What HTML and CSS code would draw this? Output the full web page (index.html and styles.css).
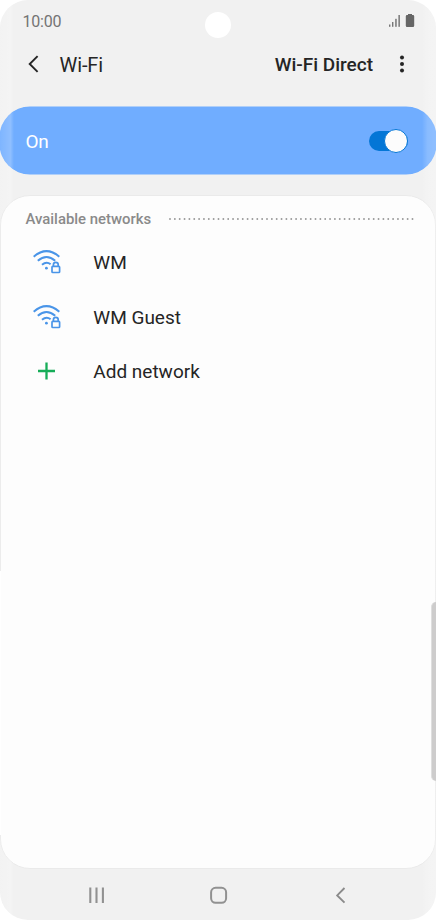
FILE: index.html
```
<!DOCTYPE html>
<html lang="en">
<head>
<meta charset="utf-8">
<title>Wi-Fi</title>
<link rel="stylesheet" href="styles.css">
</head>
<body>
<div class="phone">
  <header class="status">
    <span class="time">10:00</span>
    <svg class="status-icons" width="28" height="16" viewBox="0 0 28 16">
      <g fill="#777"><rect x="1" y="10.5" width="1.4" height="2.3"/><rect x="4" y="8" width="1.4" height="4.8"/><rect x="7.2" y="4.8" width="1.5" height="8"/><rect x="10.4" y="1" width="1.5" height="11.8"/></g>
      <path d="M20 0h4v1h1q1.200 0 1.200 1.200v9.600q0 1.200-1.200 1.200h-6q-1.200 0-1.200-1.200V2.200Q17.800 1 19 1h1z" fill="#666"/>
    </svg>
  </header>
  <i class="camera"></i>
  <nav class="appbar">
    <svg class="back" width="12" height="18" viewBox="0 0 12 18"><path d="M10.600 1.100 2.700 9l7.900 7.900" fill="none" stroke="#252525" stroke-width="1.900"/></svg>
    <h1 class="title">Wi-Fi</h1>
    <span class="direct">Wi-Fi Direct</span>
    <svg class="more" width="6" height="18" viewBox="0 0 6 18" fill="#252525"><circle cx="3" cy="2.600" r="2"/><circle cx="3" cy="9" r="2"/><circle cx="3" cy="15.400" r="2"/></svg>
  </nav>
  <section class="power">
    <span class="power-label">On</span>
    <span class="switch"><i class="knob"></i></span>
  </section>
  <main class="card">
    <div class="heading"><h2 class="heading-text">Available networks</h2>
      <svg class="dots" width="248" height="4" viewBox="0 0 248 4"><path d="M2 2H247" stroke="#999" stroke-width="1.900" stroke-linecap="round" stroke-dasharray="0 4.850"/></svg>
    </div>
    <ul class="networks">
      <li class="network">
        <svg class="wifi" width="30" height="26" viewBox="0 0 30 26" fill="none" stroke="#4a95e8" stroke-width="2">
          <path d="M1.700 7.700Q14.500-3.500 27.300 7.700M5.800 11.800Q14.500 4.100 23.200 11.800M10 15.700Q14.500 12 18.600 15.200"/><circle cx="14.400" cy="19.200" r="1.400" fill="#4a95e8" stroke="none"/>
          <rect x="20" y="17.400" width="7.600" height="6.100" rx=".8" stroke-width="1.700"/><path d="M21.400 17.300v-1.500a2.400 2.400 0 0 1 4.800 0v1.500" stroke-width="1.700"/>
        </svg>
        <span class="name">WM</span>
      </li>
      <li class="network">
        <svg class="wifi" width="30" height="26" viewBox="0 0 30 26" fill="none" stroke="#4a95e8" stroke-width="2">
          <path d="M1.700 7.700Q14.500-3.500 27.300 7.700M5.800 11.800Q14.500 4.100 23.200 11.800M10 15.700Q14.500 12 18.600 15.200"/><circle cx="14.400" cy="19.200" r="1.400" fill="#4a95e8" stroke="none"/>
          <rect x="20" y="17.400" width="7.600" height="6.100" rx=".8" stroke-width="1.700"/><path d="M21.400 17.300v-1.500a2.400 2.400 0 0 1 4.800 0v1.500" stroke-width="1.700"/>
        </svg>
        <span class="name">WM Guest</span>
      </li>
      <li class="network">
        <svg class="wifi" width="30" height="26" viewBox="0 0 30 26"><path d="M6 13h17M14.500 4.500v17" stroke="#16ad58" stroke-width="2.300"/></svg>
        <span class="name">Add network</span>
      </li>
    </ul>
  </main>
  <footer class="navbar">
    <svg width="18" height="18" viewBox="0 0 18 18" stroke="#919191" stroke-width="2.100"><path d="M2.300 1.500v15.500M8.500 1.500v15.500M14.900 1.500v15.500"/></svg>
    <svg width="18" height="18" viewBox="0 0 18 18"><rect x="1.100" y="1.800" width="15" height="15" rx="4.500" fill="none" stroke="#919191" stroke-width="2"/></svg>
    <svg width="18" height="18" viewBox="0 0 18 18"><path d="M12.500 2 5.200 9.400l7.300 7.300" fill="none" stroke="#8b8b8b" stroke-width="1.900"/></svg>
  </footer>
  <i class="edge left"></i><i class="edge right"></i>
  <i class="side-gap"></i>
  <i class="side-handle"></i>
</div>
</body>
</html>
```
FILE: styles.css
```
* { box-sizing: border-box; }
body { margin: 0; background: #fff; font-family: Roboto, sans-serif; color: #252525; }
.phone { position: relative; width: 436px; height: 920px; display: flex; flex-direction: column; background: #f1f1f1; border-radius: 28px; overflow: hidden; }
.status { height: 42px; display: flex; justify-content: space-between; padding: 12px 20.500px 0 22.500px; }
.time { font-size: 16px; line-height: 19px; letter-spacing: -.2px; color: #747474; }
.status-icons { margin-top: 2px; }
.camera { position: absolute; left: 205px; top: 11.500px; width: 26px; height: 26px; border-radius: 50%; background: #fff; }
.appbar { height: 44px; display: flex; align-items: center; padding: 0 31px 0 27px; }
.title { margin: 2px 0 0 20.500px; font-size: 20px; font-weight: 400; line-height: 24px; letter-spacing: -.1px; }
.direct { margin: 2px 26px 0 auto; font-size: 19px; font-weight: 500; line-height: 24px; }
.power { height: 67px; margin-top: 21px; padding: 0 28px 0 25.500px; display: flex; align-items: center; justify-content: space-between; border-radius: 30px; background: #70adff; box-shadow: 0 0 0 .5px #70adff; }
.power-label { color: #fff; font-size: 19px; line-height: 24px; margin-top: 2px; letter-spacing: -.2px; }
.switch { width: 39px; height: 20px; border-radius: 10px; background: #0476d6; display: flex; justify-content: flex-end; align-items: center; }
.knob { flex: none; width: 24px; height: 24px; border-radius: 50%; background: #fcfcfc; border: 1px solid #0476d6; }
.card { height: 674px; margin-top: 21px; border-radius: 30px; background: #fdfdfd; border: 1px solid #eaeaea; }
.heading { display: flex; align-items: center; height: 20px; margin: 12.500px 19px 0 24.500px; }
.heading-text { margin: 0; font-size: 14.900px; line-height: 20px; font-weight: 500; color: #8a8a8a; flex: none; }
.dots { margin-left: auto; flex: none; }
.networks { list-style: none; margin: 7.500px 0 0; padding: 0; }
.network { display: flex; align-items: center; height: 54.500px; padding-left: 31px; }
.wifi { flex: none; margin-top: -2px; }
.name { margin-left: 31.300px; font-size: 19px; line-height: 24px; }
.navbar { display: flex; justify-content: space-between; padding: 17px 86.500px 0 88px; }
.edge { position: absolute; top: 0; bottom: 0; width: 14px; pointer-events: none; }
.left { left: 0; background: linear-gradient(to right, rgba(255,255,255,.1), rgba(255,255,255,.22) 75%, rgba(255,255,255,0)); }
.right { right: 0; background: linear-gradient(to left, rgba(255,255,255,.22), rgba(255,255,255,.18) 60%, rgba(255,255,255,0)); }
.side-gap { position: absolute; left: 0; top: 571px; width: 1px; height: 264px; background: #fff; }
.side-handle { position: absolute; right: 0; top: 602px; width: 5px; height: 179px; border-radius: 5px 0 0 5px; background: #cdcccc; border-left: 1px solid #dedede; }
```
